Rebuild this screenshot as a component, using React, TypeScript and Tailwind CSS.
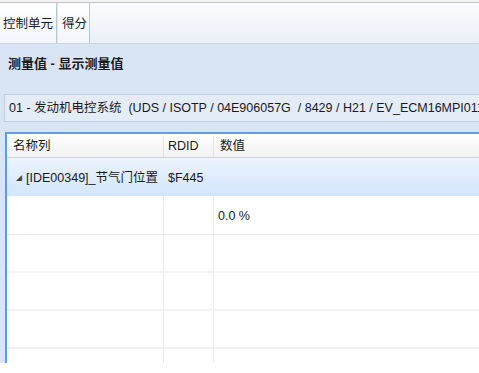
import React from "react";

const font = { fontFamily: '"Liberation Sans", "Noto Sans CJK SC", sans-serif' };

export default function App() {
  const emptyRows = [0, 1, 2, 3];
  return (
    <div className="w-[479px] h-[373px] bg-white overflow-hidden text-[12.5px] text-[#1a1a1a]" style={font}>
      <div className="h-[3px] bg-[#f4f4f4] border-b border-[#c3c3c3]" />
      {/* tab strip */}
      <div className="h-[41px] flex items-end bg-gradient-to-b from-[#fbfcfe] to-[#eaf0f8] border-b border-[#c9d6e8]">
        <div className="h-[40px] w-[57px] flex items-center pt-[3px] pl-[3px] bg-gradient-to-b from-[#ffffff] to-[#f2f6fb] border-r border-[#b9c6d8]">控制单元</div>
        <div className="h-[40px] flex items-center pt-[3px] pl-[4px] w-[33px] bg-gradient-to-b from-[#ffffff] to-[#f2f6fb] border-r border-[#b9c6d8] border-l border-l-[#e0e6ee]">得分</div>
      </div>
      {/* panel */}
      <div className="bg-[#d9e5f4] h-[319px] flex flex-col">
        <div className="h-[50px] pl-[8px] pt-[10px] font-bold text-[13px]">测量值 - 显示测量值</div>
        <div className="ml-[4px] h-[28px] bg-[#e4ecf7] border border-r-0 border-[#c2cfe0] flex items-center pl-[4px] whitespace-nowrap overflow-hidden text-[12.5px]">
          01 - 发动机电控系统&nbsp;&nbsp;(UDS / ISOTP / 04E906057G&nbsp;&nbsp;/ 8429 / H21 / EV_ECM16MPI011
        </div>
        <div className="mt-[10px] ml-[5px] flex-1 bg-white border-t-[2px] border-l-[2px] border-[#5b9bea] flex flex-col overflow-hidden">
          {/* header */}
          <div className="h-[24px] flex items-center bg-gradient-to-b from-[#ffffff] to-[#f2f2f2] border-b border-[#c8d1dc] shrink-0 pt-[2px]">
            <div className="w-[157px] pl-[6px] border-r border-[#e2e2e2] h-full flex items-center">名称列</div>
            <div className="w-[50px] pl-[4px] border-r border-[#e2e2e2] h-full flex items-center">RDID</div>
            <div className="flex-1 pl-[6px]">数值</div>
          </div>
          {/* selected row */}
          <div className="h-[38px] flex items-center bg-gradient-to-b from-[#ecf4fe] to-[#d2e5fc] shrink-0 pt-[2px]">
            <div className="w-[157px] pl-[9px] flex items-center whitespace-nowrap">
              <span className="text-[6px] mr-[4px] text-[#444]">◢</span>[IDE00349]_节气门位置
            </div>
            <div className="w-[50px] pl-[4px]">$F445</div>
            <div className="flex-1" />
          </div>
          <div className="h-[39px] flex border-b border-[#ececec] shrink-0">
            <div className="w-[157px] border-r border-[#ececec]" />
            <div className="w-[50px] border-r border-[#ececec]" />
            <div className="flex-1 pl-[4px] flex items-center pt-[2px]">0.0 %</div>
          </div>
          {emptyRows.map((i) => (
            <div key={i} className="h-[38px] flex border-b-[2px] border-[#f2f2f2] shrink-0">
              <div className="w-[157px] border-r border-[#ececec]" />
              <div className="w-[50px] border-r border-[#ececec]" />
              <div className="flex-1" />
            </div>
          ))}
        </div>
      </div>
    </div>
  );
}
